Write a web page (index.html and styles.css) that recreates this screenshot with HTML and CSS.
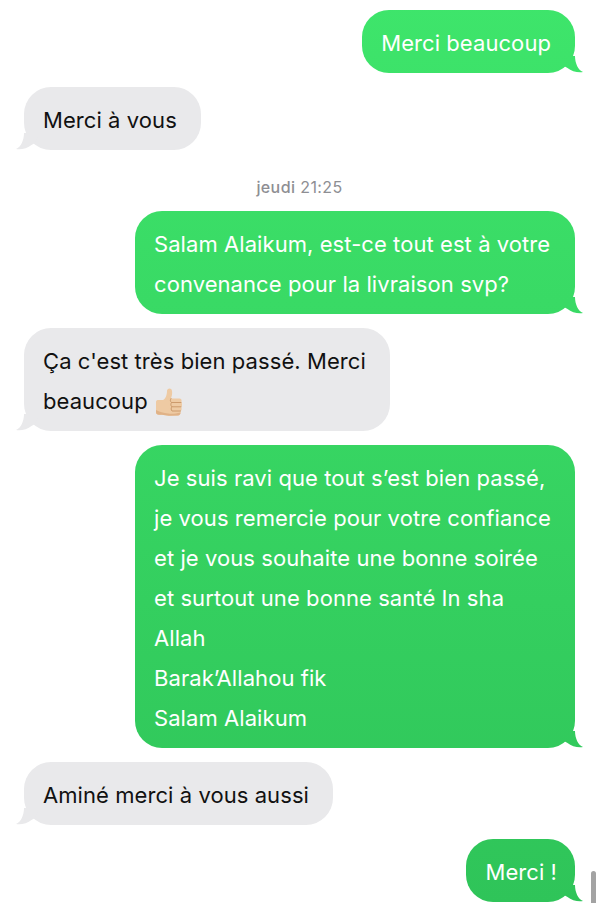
FILE: index.html
```html
<!DOCTYPE html>
<html lang="fr">
<head>
  <meta charset="UTF-8">
  <meta name="viewport" content="width=device-width, initial-scale=1.0">
  <title>Messages</title>
  <link rel="stylesheet" href="styles.css">
</head>
<body>
  <div class="thread">
    <div class="bubble out">Merci beaucoup</div>
    <div class="bubble in">Merci à vous</div>

    <div class="time"><b>jeudi</b> 21:25</div>

    <div class="bubble out wide">Salam Alaikum, est-ce tout est à votre<br>convenance pour la livraison svp?</div>
    <div class="bubble in">Ça c'est très bien passé. Merci<br>beaucoup
      <svg class="thumb" viewBox="0 0 26 28" aria-hidden="true">
        <path fill="#eecaa3" d="M0 14 C0 12.500 1 12 2.500 12 L7 12 C9.500 11 11 7 11 3 C11 0 15.500 -0.500 16 3 C16.500 6 15.500 8.500 15 10.500 L23.500 10.500 C25.500 10.500 26 12.500 25.300 14 C26.300 15.500 26.300 18 25.200 19 C26 20.500 25.700 22.500 24.500 23.200 C25 25.500 24 27.500 22 27.500 L13 27.800 C10.500 27.800 8 27 6 26.800 L3 26.800 C1 26.800 0 25.800 0 24 Z"/>
        <path fill="#e0b287" d="M0 22 C3 24 8 25 12 25.500 C15 26 19 26 24.600 24.500 C24.500 26 23.500 27.500 22 27.500 L13 27.800 C10.500 27.800 8 27 6 26.800 L3 26.800 C1 26.800 0 25.800 0 24 Z"/>
        <path fill="none" stroke="#cc9a6c" stroke-width="1" stroke-linecap="round" d="M15 10.500 C14 12 14.200 13.500 15.500 14.500 L25 14.500 M15.500 14.500 C14.500 16 14.700 17.500 15.800 18.800 L25 18.800 M15.800 18.800 C14.800 20 15 22 16 23 L24.500 23"/>
      </svg>
    </div>
    <div class="bubble out wide">Je suis ravi que tout s’est bien passé,<br>je vous remercie pour votre confiance<br>et je vous souhaite une bonne soirée<br>et surtout une bonne santé In sha<br>Allah<br>Barak’Allahou fik<br>Salam Alaikum</div>
    <div class="bubble in">Aminé merci à vous aussi</div>
    <div class="bubble out short">Merci !</div>
  </div>

  <div class="scrollbar"></div>
</body>
</html>
```

FILE: styles.css
```css
body {
  font-family: Inter, "Liberation Sans", sans-serif;
  margin: 0;
  padding: 0;
  background-color: #fff;
  color: #111;
}
.thread {
  display: flex;
  flex-direction: column;
  gap: 14px;
  padding: 10px 25px 0 24px;
}
.bubble {
  position: relative;
  width: fit-content;
  box-sizing: border-box;
  padding: 13px 24px 10px 19px;
  border-radius: 27px;
  font-size: 22px;
  line-height: 40px;
  letter-spacing: 0.07px;
}
.bubble::after {
  content: "";
  position: absolute;
  bottom: 0;
  width: 24px;
  height: 20px;
  background: inherit;
}
.out {
  align-self: flex-end;
  background: linear-gradient(#3ee56b, #2fc459) fixed;
  color: #fff;
}
.out::after {
  right: -8px;
  clip-path: path("M16 3 C16 10 19 17 24 19 C19.500 20 12.500 18.500 8.500 15 L5 13 L0 3 Z");
}
.in {
  align-self: flex-start;
  background: #e9e9eb;
}
.in::after {
  left: -8px;
  clip-path: path("M8 3 C8 10 5 17 0 19 C4.500 20 11.500 18.500 15.500 15 L19 13 L24 3 Z");
}
.wide {
  width: 440px;
}
.short {
  padding-right: 18px;
}
.time {
  align-self: center;
  margin-top: 13px;
  font-size: 16px;
  line-height: 20px;
  letter-spacing: 0.4px;
  color: #8e8e93;
}
.time b {
  font-weight: 500;
}
.thumb {
  width: 26px;
  height: 28px;
  margin-left: 2px;
  vertical-align: -7px;
}
.scrollbar {
  position: fixed;
  right: 4px;
  bottom: 0;
  width: 5px;
  height: 32px;
  border-radius: 3px 3px 0 0;
  background: #a3a3a3;
}
```
